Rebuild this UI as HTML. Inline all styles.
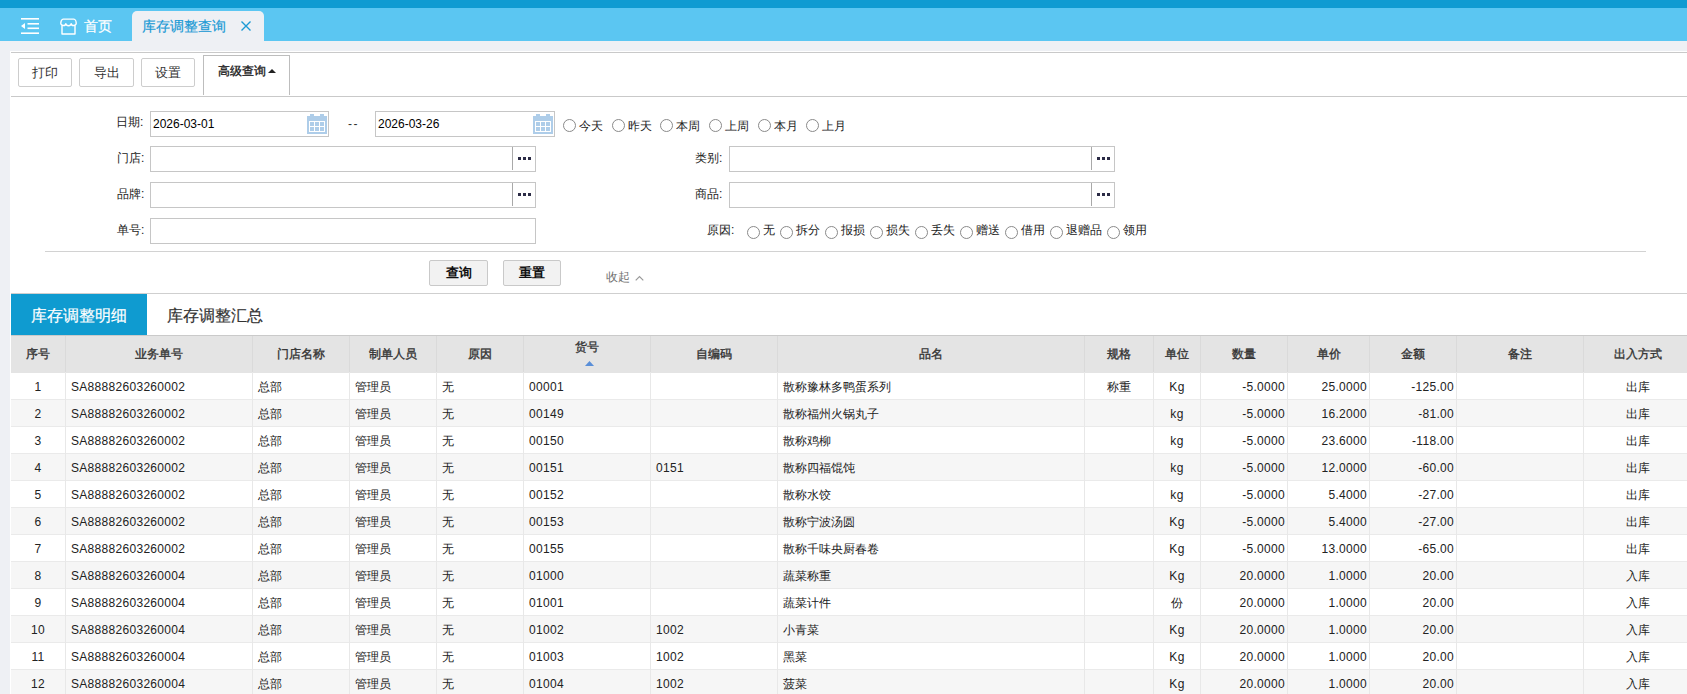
<!DOCTYPE html><html><head><meta charset="utf-8"><style>
*{margin:0;padding:0;box-sizing:border-box}
html,body{width:1687px;height:694px;overflow:hidden;background:#eef0f4;font-family:"Liberation Sans",sans-serif;color:#333}
.abs{position:absolute}
.btn{position:absolute;height:29px;border:1px solid #cdcdcd;border-radius:2px;background:#fff;font-size:13px;line-height:27px;text-align:center;color:#333}
.inp{position:absolute;height:26px;border:1px solid #c6c6c6;background:#fff}
.lab{position:absolute;font-size:12px;line-height:14px;color:#222;white-space:nowrap}
.lbl{position:absolute;font-size:12px;line-height:14px;color:#222;white-space:nowrap}
.radio{position:absolute;width:13px;height:13px;border:1px solid #8a8a8a;border-radius:50%;background:#fff}
.dots{position:absolute;width:13px;height:3px;background:linear-gradient(90deg,#2b2b45 0 3px,transparent 3px 5px,#2b2b45 5px 8px,transparent 8px 10px,#2b2b45 10px 13px)}
.th{position:absolute;top:336px;height:37px;font-size:12px;font-weight:normal;-webkit-text-stroke:0.35px #333;line-height:36px;text-align:center;color:#333;border-right:1px solid #dadada}
.td{position:absolute;height:27px;font-size:12px;line-height:30px;color:#222;white-space:nowrap;border-right:1px solid #e8e8e8;padding:0 5px}
.row{position:absolute;left:11px;width:1676px;height:27px;border-bottom:1px solid #eaeaea}
.n{letter-spacing:0.3px}
</style></head><body>

<div class="abs" style="left:0;top:0;width:1687px;height:8px;background:#0f9bd2"></div>
<div class="abs" style="left:0;top:8px;width:1687px;height:33px;background:#5bc6f2"></div>
<svg class="abs" style="left:21px;top:18px" width="18" height="16" viewBox="0 0 18 16"><g fill="#fff"><rect x="0" y="0" width="18" height="1.6"/><rect x="6.5" y="5" width="11.5" height="1.6"/><rect x="6.5" y="9.5" width="11.5" height="1.6"/><rect x="0" y="14.4" width="18" height="1.6"/><path d="M0 8L4 5v6z"/></g></svg>
<svg class="abs" style="left:60px;top:18px" width="17" height="17" viewBox="0 0 17 17"><g fill="none" stroke="#fff" stroke-width="1.4" stroke-linejoin="round"><path d="M3.2 1.1H13.8C15.3 1.1 16.2 3.6 16.2 5.3A2.5 2.1 0 0 1 11.2 5.6A2.7 2.1 0 0 1 5.8 5.6A2.5 2.1 0 0 1 0.8 5.3C0.8 3.6 1.7 1.1 3.2 1.1Z"/><path d="M2 7.4V16H15V7.4"/></g></svg>
<div class="abs" style="left:84px;top:16px;font-size:14px;line-height:20px;color:#fff;-webkit-text-stroke:0.2px #fff">首页</div>
<div class="abs" style="left:132px;top:11px;width:132px;height:30px;background:#eef0f4;border-radius:5px 5px 0 0"></div>
<div class="abs" style="left:142px;top:16px;font-size:14px;line-height:20px;color:#1b9ad5;-webkit-text-stroke:0.2px #1b9ad5">库存调整查询</div>
<svg class="abs" style="left:241px;top:21px" width="10" height="10" viewBox="0 0 10 10"><path d="M.5.5l9 9M9.5.5l-9 9" stroke="#1b9ad5" stroke-width="1.4"/></svg>
<div class="abs" style="left:10px;top:51px;width:1677px;height:643px;background:#fff"></div>
<div class="abs" style="left:11px;top:52px;width:1676px;height:1px;background:#c9c9c9"></div>
<div class="abs" style="left:11px;top:96px;width:1676px;height:1px;background:#c9c9c9"></div>
<div class="btn" style="left:18px;top:58px;width:54px">打印</div>
<div class="btn" style="left:79px;top:58px;width:55px">导出</div>
<div class="btn" style="left:141px;top:58px;width:54px">设置</div>
<div class="abs" style="left:203px;top:55px;width:87px;height:40px;border:1px solid #bdbdbd;border-bottom:none;background:#fff"></div>
<div class="abs" style="left:218px;top:63px;font-size:12px;-webkit-text-stroke:0.35px #222;line-height:16px;color:#222">高级查询</div>
<svg class="abs" style="left:268px;top:69px" width="8" height="4" viewBox="0 0 8 4"><path d="M0 4L4 0l4 4z" fill="#222"/></svg>
<div class="lab" style="left:116px;top:115px">日期:</div>
<div class="inp" style="left:150px;top:111px;width:179px"></div>
<div class="abs" style="left:153px;top:117px;font-size:12px;line-height:14px;color:#000">2026-03-01</div>
<svg class="abs" style="left:307px;top:114px" width="20" height="20" viewBox="0 0 20 20"><path fill="#aecde9" d="M3 0h4v2h6V0h4v2h3v18H0V2h3z"/><rect x="2" y="7" width="16" height="11" fill="#fff"/><g fill="#aecde9"><rect x="3" y="8" width="4" height="4"/><rect x="8" y="8" width="4" height="4"/><rect x="13" y="8" width="4" height="4"/><rect x="3" y="13" width="4" height="4"/><rect x="8" y="13" width="4" height="4"/><rect x="13" y="13" width="4" height="4"/></g></svg>
<div class="abs" style="left:348px;top:117px;font-size:12px;line-height:14px;color:#333;letter-spacing:1.5px">--</div>
<div class="inp" style="left:375px;top:111px;width:180px"></div>
<div class="abs" style="left:378px;top:117px;font-size:12px;line-height:14px;color:#000">2026-03-26</div>
<svg class="abs" style="left:533px;top:114px" width="20" height="20" viewBox="0 0 20 20"><path fill="#aecde9" d="M3 0h4v2h6V0h4v2h3v18H0V2h3z"/><rect x="2" y="7" width="16" height="11" fill="#fff"/><g fill="#aecde9"><rect x="3" y="8" width="4" height="4"/><rect x="8" y="8" width="4" height="4"/><rect x="13" y="8" width="4" height="4"/><rect x="3" y="13" width="4" height="4"/><rect x="8" y="13" width="4" height="4"/><rect x="13" y="13" width="4" height="4"/></g></svg>
<div class="radio" style="left:563px;top:119px"></div><div class="lbl" style="left:579px;top:119px">今天</div>
<div class="radio" style="left:612px;top:119px"></div><div class="lbl" style="left:628px;top:119px">昨天</div>
<div class="radio" style="left:660px;top:119px"></div><div class="lbl" style="left:676px;top:119px">本周</div>
<div class="radio" style="left:709px;top:119px"></div><div class="lbl" style="left:725px;top:119px">上周</div>
<div class="radio" style="left:758px;top:119px"></div><div class="lbl" style="left:774px;top:119px">本月</div>
<div class="radio" style="left:806px;top:119px"></div><div class="lbl" style="left:822px;top:119px">上月</div>
<div class="lab" style="left:117px;top:151px">门店:</div>
<div class="inp" style="left:150px;top:146px;width:386px"></div><div class="abs" style="left:512px;top:147px;width:1px;height:23px;background:#a9a9a9"></div><div class="dots" style="left:518px;top:157px"></div>
<div class="lab" style="left:695px;top:151px">类别:</div>
<div class="inp" style="left:729px;top:146px;width:386px"></div><div class="abs" style="left:1091px;top:147px;width:1px;height:23px;background:#a9a9a9"></div><div class="dots" style="left:1097px;top:157px"></div>
<div class="lab" style="left:117px;top:187px">品牌:</div>
<div class="inp" style="left:150px;top:182px;width:386px"></div><div class="abs" style="left:512px;top:183px;width:1px;height:23px;background:#a9a9a9"></div><div class="dots" style="left:518px;top:193px"></div>
<div class="lab" style="left:695px;top:187px">商品:</div>
<div class="inp" style="left:729px;top:182px;width:386px"></div><div class="abs" style="left:1091px;top:183px;width:1px;height:23px;background:#a9a9a9"></div><div class="dots" style="left:1097px;top:193px"></div>
<div class="lab" style="left:117px;top:223px">单号:</div>
<div class="inp" style="left:150px;top:218px;width:386px"></div>
<div class="lab" style="left:707px;top:223px">原因:</div>
<div class="radio" style="left:747px;top:226px"></div><div class="lbl" style="left:763px;top:223px">无</div>
<div class="radio" style="left:780px;top:226px"></div><div class="lbl" style="left:796px;top:223px">拆分</div>
<div class="radio" style="left:825px;top:226px"></div><div class="lbl" style="left:841px;top:223px">报损</div>
<div class="radio" style="left:870px;top:226px"></div><div class="lbl" style="left:886px;top:223px">损失</div>
<div class="radio" style="left:915px;top:226px"></div><div class="lbl" style="left:931px;top:223px">丢失</div>
<div class="radio" style="left:960px;top:226px"></div><div class="lbl" style="left:976px;top:223px">赠送</div>
<div class="radio" style="left:1005px;top:226px"></div><div class="lbl" style="left:1021px;top:223px">借用</div>
<div class="radio" style="left:1050px;top:226px"></div><div class="lbl" style="left:1066px;top:223px">退赠品</div>
<div class="radio" style="left:1107px;top:226px"></div><div class="lbl" style="left:1123px;top:223px">领用</div>
<div class="abs" style="left:45px;top:251px;width:1601px;height:1px;background:#d2d2d2"></div>
<div class="btn" style="left:429px;top:260px;width:59px;height:26px;line-height:24px;background:#f2f2f2;font-weight:bold;color:#111;border-color:#c9c9c9">查询</div>
<div class="btn" style="left:503px;top:260px;width:58px;height:26px;line-height:24px;background:#f2f2f2;font-weight:bold;color:#111;border-color:#c9c9c9">重置</div>
<div class="abs" style="left:606px;top:270px;font-size:12px;line-height:14px;color:#707070">收起</div>
<svg class="abs" style="left:635px;top:275px" width="9" height="6" viewBox="0 0 9 6"><path d="M.7 5.3L4.5 1.5l3.8 3.8" fill="none" stroke="#999" stroke-width="1.2"/></svg>
<div class="abs" style="left:11px;top:293px;width:1676px;height:1px;background:#cfcfcf"></div>
<div class="abs" style="left:11px;top:294px;width:136px;height:41px;background:#0f9bd0"></div>
<div class="abs" style="left:31px;top:306px;font-size:16px;line-height:20px;color:#fff;-webkit-text-stroke:0.2px #fff">库存调整明细</div>
<div class="abs" style="left:167px;top:306px;font-size:16px;line-height:20px;color:#333;-webkit-text-stroke:0.2px #333">库存调整汇总</div>
<div class="abs" style="left:11px;top:335px;width:1676px;height:38px;background:#e4e4e4;border-top:1px solid #cacaca"></div>
<div class="th" style="left:11px;width:55px">序号</div>
<div class="th" style="left:66px;width:187px">业务单号</div>
<div class="th" style="left:253px;width:97px">门店名称</div>
<div class="th" style="left:350px;width:87px">制单人员</div>
<div class="th" style="left:437px;width:87px">原因</div>
<div class="th" style="left:524px;width:127px;line-height:16px;padding-top:3px">货号</div>
<svg class="abs" style="left:585px;top:361px" width="9" height="5" viewBox="0 0 9 5"><path d="M0 5L4.5 0 9 5z" fill="#5a8fd8"/></svg>
<div class="th" style="left:651px;width:127px">自编码</div>
<div class="th" style="left:778px;width:307px">品名</div>
<div class="th" style="left:1085px;width:69px">规格</div>
<div class="th" style="left:1154px;width:47px">单位</div>
<div class="th" style="left:1201px;width:87px">数量</div>
<div class="th" style="left:1288px;width:82px">单价</div>
<div class="th" style="left:1370px;width:87px">金额</div>
<div class="th" style="left:1457px;width:127px">备注</div>
<div class="th" style="left:1584px;width:109px">出入方式</div>
<div class="row" style="top:373px;background:#fff"></div>
<div class="td n" style="left:11px;top:372px;width:55px;height:28px;text-align:center;">1</div>
<div class="td n" style="left:66px;top:372px;width:187px;height:28px;text-align:left;">SA88882603260002</div>
<div class="td" style="left:253px;top:372px;width:97px;height:28px;text-align:left;">总部</div>
<div class="td" style="left:350px;top:372px;width:87px;height:28px;text-align:left;">管理员</div>
<div class="td" style="left:437px;top:372px;width:87px;height:28px;text-align:left;">无</div>
<div class="td n" style="left:524px;top:372px;width:127px;height:28px;text-align:left;">00001</div>
<div class="td n" style="left:651px;top:372px;width:127px;height:28px;text-align:left;"></div>
<div class="td" style="left:778px;top:372px;width:307px;height:28px;text-align:left;">散称豫林多鸭蛋系列</div>
<div class="td" style="left:1085px;top:372px;width:69px;height:28px;text-align:center;">称重</div>
<div class="td n" style="left:1154px;top:372px;width:47px;height:28px;text-align:center;">Kg</div>
<div class="td n" style="left:1201px;top:372px;width:87px;height:28px;text-align:right;padding:0 2px 0 3px">-5.0000</div>
<div class="td n" style="left:1288px;top:372px;width:82px;height:28px;text-align:right;padding:0 2px 0 3px">25.0000</div>
<div class="td n" style="left:1370px;top:372px;width:87px;height:28px;text-align:right;padding:0 2px 0 3px">-125.00</div>
<div class="td n" style="left:1457px;top:372px;width:127px;height:28px;text-align:left;"></div>
<div class="td" style="left:1584px;top:372px;width:109px;height:28px;text-align:center;">出库</div>
<div class="row" style="top:400px;background:#f6f6f6"></div>
<div class="td n" style="left:11px;top:399px;width:55px;height:28px;text-align:center;">2</div>
<div class="td n" style="left:66px;top:399px;width:187px;height:28px;text-align:left;">SA88882603260002</div>
<div class="td" style="left:253px;top:399px;width:97px;height:28px;text-align:left;">总部</div>
<div class="td" style="left:350px;top:399px;width:87px;height:28px;text-align:left;">管理员</div>
<div class="td" style="left:437px;top:399px;width:87px;height:28px;text-align:left;">无</div>
<div class="td n" style="left:524px;top:399px;width:127px;height:28px;text-align:left;">00149</div>
<div class="td n" style="left:651px;top:399px;width:127px;height:28px;text-align:left;"></div>
<div class="td" style="left:778px;top:399px;width:307px;height:28px;text-align:left;">散称福州火锅丸子</div>
<div class="td n" style="left:1085px;top:399px;width:69px;height:28px;text-align:center;"></div>
<div class="td n" style="left:1154px;top:399px;width:47px;height:28px;text-align:center;">kg</div>
<div class="td n" style="left:1201px;top:399px;width:87px;height:28px;text-align:right;padding:0 2px 0 3px">-5.0000</div>
<div class="td n" style="left:1288px;top:399px;width:82px;height:28px;text-align:right;padding:0 2px 0 3px">16.2000</div>
<div class="td n" style="left:1370px;top:399px;width:87px;height:28px;text-align:right;padding:0 2px 0 3px">-81.00</div>
<div class="td n" style="left:1457px;top:399px;width:127px;height:28px;text-align:left;"></div>
<div class="td" style="left:1584px;top:399px;width:109px;height:28px;text-align:center;">出库</div>
<div class="row" style="top:427px;background:#fff"></div>
<div class="td n" style="left:11px;top:426px;width:55px;height:28px;text-align:center;">3</div>
<div class="td n" style="left:66px;top:426px;width:187px;height:28px;text-align:left;">SA88882603260002</div>
<div class="td" style="left:253px;top:426px;width:97px;height:28px;text-align:left;">总部</div>
<div class="td" style="left:350px;top:426px;width:87px;height:28px;text-align:left;">管理员</div>
<div class="td" style="left:437px;top:426px;width:87px;height:28px;text-align:left;">无</div>
<div class="td n" style="left:524px;top:426px;width:127px;height:28px;text-align:left;">00150</div>
<div class="td n" style="left:651px;top:426px;width:127px;height:28px;text-align:left;"></div>
<div class="td" style="left:778px;top:426px;width:307px;height:28px;text-align:left;">散称鸡柳</div>
<div class="td n" style="left:1085px;top:426px;width:69px;height:28px;text-align:center;"></div>
<div class="td n" style="left:1154px;top:426px;width:47px;height:28px;text-align:center;">kg</div>
<div class="td n" style="left:1201px;top:426px;width:87px;height:28px;text-align:right;padding:0 2px 0 3px">-5.0000</div>
<div class="td n" style="left:1288px;top:426px;width:82px;height:28px;text-align:right;padding:0 2px 0 3px">23.6000</div>
<div class="td n" style="left:1370px;top:426px;width:87px;height:28px;text-align:right;padding:0 2px 0 3px">-118.00</div>
<div class="td n" style="left:1457px;top:426px;width:127px;height:28px;text-align:left;"></div>
<div class="td" style="left:1584px;top:426px;width:109px;height:28px;text-align:center;">出库</div>
<div class="row" style="top:454px;background:#f6f6f6"></div>
<div class="td n" style="left:11px;top:453px;width:55px;height:28px;text-align:center;">4</div>
<div class="td n" style="left:66px;top:453px;width:187px;height:28px;text-align:left;">SA88882603260002</div>
<div class="td" style="left:253px;top:453px;width:97px;height:28px;text-align:left;">总部</div>
<div class="td" style="left:350px;top:453px;width:87px;height:28px;text-align:left;">管理员</div>
<div class="td" style="left:437px;top:453px;width:87px;height:28px;text-align:left;">无</div>
<div class="td n" style="left:524px;top:453px;width:127px;height:28px;text-align:left;">00151</div>
<div class="td n" style="left:651px;top:453px;width:127px;height:28px;text-align:left;">0151</div>
<div class="td" style="left:778px;top:453px;width:307px;height:28px;text-align:left;">散称四福馄饨</div>
<div class="td n" style="left:1085px;top:453px;width:69px;height:28px;text-align:center;"></div>
<div class="td n" style="left:1154px;top:453px;width:47px;height:28px;text-align:center;">kg</div>
<div class="td n" style="left:1201px;top:453px;width:87px;height:28px;text-align:right;padding:0 2px 0 3px">-5.0000</div>
<div class="td n" style="left:1288px;top:453px;width:82px;height:28px;text-align:right;padding:0 2px 0 3px">12.0000</div>
<div class="td n" style="left:1370px;top:453px;width:87px;height:28px;text-align:right;padding:0 2px 0 3px">-60.00</div>
<div class="td n" style="left:1457px;top:453px;width:127px;height:28px;text-align:left;"></div>
<div class="td" style="left:1584px;top:453px;width:109px;height:28px;text-align:center;">出库</div>
<div class="row" style="top:481px;background:#fff"></div>
<div class="td n" style="left:11px;top:480px;width:55px;height:28px;text-align:center;">5</div>
<div class="td n" style="left:66px;top:480px;width:187px;height:28px;text-align:left;">SA88882603260002</div>
<div class="td" style="left:253px;top:480px;width:97px;height:28px;text-align:left;">总部</div>
<div class="td" style="left:350px;top:480px;width:87px;height:28px;text-align:left;">管理员</div>
<div class="td" style="left:437px;top:480px;width:87px;height:28px;text-align:left;">无</div>
<div class="td n" style="left:524px;top:480px;width:127px;height:28px;text-align:left;">00152</div>
<div class="td n" style="left:651px;top:480px;width:127px;height:28px;text-align:left;"></div>
<div class="td" style="left:778px;top:480px;width:307px;height:28px;text-align:left;">散称水饺</div>
<div class="td n" style="left:1085px;top:480px;width:69px;height:28px;text-align:center;"></div>
<div class="td n" style="left:1154px;top:480px;width:47px;height:28px;text-align:center;">kg</div>
<div class="td n" style="left:1201px;top:480px;width:87px;height:28px;text-align:right;padding:0 2px 0 3px">-5.0000</div>
<div class="td n" style="left:1288px;top:480px;width:82px;height:28px;text-align:right;padding:0 2px 0 3px">5.4000</div>
<div class="td n" style="left:1370px;top:480px;width:87px;height:28px;text-align:right;padding:0 2px 0 3px">-27.00</div>
<div class="td n" style="left:1457px;top:480px;width:127px;height:28px;text-align:left;"></div>
<div class="td" style="left:1584px;top:480px;width:109px;height:28px;text-align:center;">出库</div>
<div class="row" style="top:508px;background:#f6f6f6"></div>
<div class="td n" style="left:11px;top:507px;width:55px;height:28px;text-align:center;">6</div>
<div class="td n" style="left:66px;top:507px;width:187px;height:28px;text-align:left;">SA88882603260002</div>
<div class="td" style="left:253px;top:507px;width:97px;height:28px;text-align:left;">总部</div>
<div class="td" style="left:350px;top:507px;width:87px;height:28px;text-align:left;">管理员</div>
<div class="td" style="left:437px;top:507px;width:87px;height:28px;text-align:left;">无</div>
<div class="td n" style="left:524px;top:507px;width:127px;height:28px;text-align:left;">00153</div>
<div class="td n" style="left:651px;top:507px;width:127px;height:28px;text-align:left;"></div>
<div class="td" style="left:778px;top:507px;width:307px;height:28px;text-align:left;">散称宁波汤圆</div>
<div class="td n" style="left:1085px;top:507px;width:69px;height:28px;text-align:center;"></div>
<div class="td n" style="left:1154px;top:507px;width:47px;height:28px;text-align:center;">Kg</div>
<div class="td n" style="left:1201px;top:507px;width:87px;height:28px;text-align:right;padding:0 2px 0 3px">-5.0000</div>
<div class="td n" style="left:1288px;top:507px;width:82px;height:28px;text-align:right;padding:0 2px 0 3px">5.4000</div>
<div class="td n" style="left:1370px;top:507px;width:87px;height:28px;text-align:right;padding:0 2px 0 3px">-27.00</div>
<div class="td n" style="left:1457px;top:507px;width:127px;height:28px;text-align:left;"></div>
<div class="td" style="left:1584px;top:507px;width:109px;height:28px;text-align:center;">出库</div>
<div class="row" style="top:535px;background:#fff"></div>
<div class="td n" style="left:11px;top:534px;width:55px;height:28px;text-align:center;">7</div>
<div class="td n" style="left:66px;top:534px;width:187px;height:28px;text-align:left;">SA88882603260002</div>
<div class="td" style="left:253px;top:534px;width:97px;height:28px;text-align:left;">总部</div>
<div class="td" style="left:350px;top:534px;width:87px;height:28px;text-align:left;">管理员</div>
<div class="td" style="left:437px;top:534px;width:87px;height:28px;text-align:left;">无</div>
<div class="td n" style="left:524px;top:534px;width:127px;height:28px;text-align:left;">00155</div>
<div class="td n" style="left:651px;top:534px;width:127px;height:28px;text-align:left;"></div>
<div class="td" style="left:778px;top:534px;width:307px;height:28px;text-align:left;">散称千味央厨春卷</div>
<div class="td n" style="left:1085px;top:534px;width:69px;height:28px;text-align:center;"></div>
<div class="td n" style="left:1154px;top:534px;width:47px;height:28px;text-align:center;">Kg</div>
<div class="td n" style="left:1201px;top:534px;width:87px;height:28px;text-align:right;padding:0 2px 0 3px">-5.0000</div>
<div class="td n" style="left:1288px;top:534px;width:82px;height:28px;text-align:right;padding:0 2px 0 3px">13.0000</div>
<div class="td n" style="left:1370px;top:534px;width:87px;height:28px;text-align:right;padding:0 2px 0 3px">-65.00</div>
<div class="td n" style="left:1457px;top:534px;width:127px;height:28px;text-align:left;"></div>
<div class="td" style="left:1584px;top:534px;width:109px;height:28px;text-align:center;">出库</div>
<div class="row" style="top:562px;background:#f6f6f6"></div>
<div class="td n" style="left:11px;top:561px;width:55px;height:28px;text-align:center;">8</div>
<div class="td n" style="left:66px;top:561px;width:187px;height:28px;text-align:left;">SA88882603260004</div>
<div class="td" style="left:253px;top:561px;width:97px;height:28px;text-align:left;">总部</div>
<div class="td" style="left:350px;top:561px;width:87px;height:28px;text-align:left;">管理员</div>
<div class="td" style="left:437px;top:561px;width:87px;height:28px;text-align:left;">无</div>
<div class="td n" style="left:524px;top:561px;width:127px;height:28px;text-align:left;">01000</div>
<div class="td n" style="left:651px;top:561px;width:127px;height:28px;text-align:left;"></div>
<div class="td" style="left:778px;top:561px;width:307px;height:28px;text-align:left;">蔬菜称重</div>
<div class="td n" style="left:1085px;top:561px;width:69px;height:28px;text-align:center;"></div>
<div class="td n" style="left:1154px;top:561px;width:47px;height:28px;text-align:center;">Kg</div>
<div class="td n" style="left:1201px;top:561px;width:87px;height:28px;text-align:right;padding:0 2px 0 3px">20.0000</div>
<div class="td n" style="left:1288px;top:561px;width:82px;height:28px;text-align:right;padding:0 2px 0 3px">1.0000</div>
<div class="td n" style="left:1370px;top:561px;width:87px;height:28px;text-align:right;padding:0 2px 0 3px">20.00</div>
<div class="td n" style="left:1457px;top:561px;width:127px;height:28px;text-align:left;"></div>
<div class="td" style="left:1584px;top:561px;width:109px;height:28px;text-align:center;">入库</div>
<div class="row" style="top:589px;background:#fff"></div>
<div class="td n" style="left:11px;top:588px;width:55px;height:28px;text-align:center;">9</div>
<div class="td n" style="left:66px;top:588px;width:187px;height:28px;text-align:left;">SA88882603260004</div>
<div class="td" style="left:253px;top:588px;width:97px;height:28px;text-align:left;">总部</div>
<div class="td" style="left:350px;top:588px;width:87px;height:28px;text-align:left;">管理员</div>
<div class="td" style="left:437px;top:588px;width:87px;height:28px;text-align:left;">无</div>
<div class="td n" style="left:524px;top:588px;width:127px;height:28px;text-align:left;">01001</div>
<div class="td n" style="left:651px;top:588px;width:127px;height:28px;text-align:left;"></div>
<div class="td" style="left:778px;top:588px;width:307px;height:28px;text-align:left;">蔬菜计件</div>
<div class="td n" style="left:1085px;top:588px;width:69px;height:28px;text-align:center;"></div>
<div class="td" style="left:1154px;top:588px;width:47px;height:28px;text-align:center;">份</div>
<div class="td n" style="left:1201px;top:588px;width:87px;height:28px;text-align:right;padding:0 2px 0 3px">20.0000</div>
<div class="td n" style="left:1288px;top:588px;width:82px;height:28px;text-align:right;padding:0 2px 0 3px">1.0000</div>
<div class="td n" style="left:1370px;top:588px;width:87px;height:28px;text-align:right;padding:0 2px 0 3px">20.00</div>
<div class="td n" style="left:1457px;top:588px;width:127px;height:28px;text-align:left;"></div>
<div class="td" style="left:1584px;top:588px;width:109px;height:28px;text-align:center;">入库</div>
<div class="row" style="top:616px;background:#f6f6f6"></div>
<div class="td n" style="left:11px;top:615px;width:55px;height:28px;text-align:center;">10</div>
<div class="td n" style="left:66px;top:615px;width:187px;height:28px;text-align:left;">SA88882603260004</div>
<div class="td" style="left:253px;top:615px;width:97px;height:28px;text-align:left;">总部</div>
<div class="td" style="left:350px;top:615px;width:87px;height:28px;text-align:left;">管理员</div>
<div class="td" style="left:437px;top:615px;width:87px;height:28px;text-align:left;">无</div>
<div class="td n" style="left:524px;top:615px;width:127px;height:28px;text-align:left;">01002</div>
<div class="td n" style="left:651px;top:615px;width:127px;height:28px;text-align:left;">1002</div>
<div class="td" style="left:778px;top:615px;width:307px;height:28px;text-align:left;">小青菜</div>
<div class="td n" style="left:1085px;top:615px;width:69px;height:28px;text-align:center;"></div>
<div class="td n" style="left:1154px;top:615px;width:47px;height:28px;text-align:center;">Kg</div>
<div class="td n" style="left:1201px;top:615px;width:87px;height:28px;text-align:right;padding:0 2px 0 3px">20.0000</div>
<div class="td n" style="left:1288px;top:615px;width:82px;height:28px;text-align:right;padding:0 2px 0 3px">1.0000</div>
<div class="td n" style="left:1370px;top:615px;width:87px;height:28px;text-align:right;padding:0 2px 0 3px">20.00</div>
<div class="td n" style="left:1457px;top:615px;width:127px;height:28px;text-align:left;"></div>
<div class="td" style="left:1584px;top:615px;width:109px;height:28px;text-align:center;">入库</div>
<div class="row" style="top:643px;background:#fff"></div>
<div class="td n" style="left:11px;top:642px;width:55px;height:28px;text-align:center;">11</div>
<div class="td n" style="left:66px;top:642px;width:187px;height:28px;text-align:left;">SA88882603260004</div>
<div class="td" style="left:253px;top:642px;width:97px;height:28px;text-align:left;">总部</div>
<div class="td" style="left:350px;top:642px;width:87px;height:28px;text-align:left;">管理员</div>
<div class="td" style="left:437px;top:642px;width:87px;height:28px;text-align:left;">无</div>
<div class="td n" style="left:524px;top:642px;width:127px;height:28px;text-align:left;">01003</div>
<div class="td n" style="left:651px;top:642px;width:127px;height:28px;text-align:left;">1002</div>
<div class="td" style="left:778px;top:642px;width:307px;height:28px;text-align:left;">黑菜</div>
<div class="td n" style="left:1085px;top:642px;width:69px;height:28px;text-align:center;"></div>
<div class="td n" style="left:1154px;top:642px;width:47px;height:28px;text-align:center;">Kg</div>
<div class="td n" style="left:1201px;top:642px;width:87px;height:28px;text-align:right;padding:0 2px 0 3px">20.0000</div>
<div class="td n" style="left:1288px;top:642px;width:82px;height:28px;text-align:right;padding:0 2px 0 3px">1.0000</div>
<div class="td n" style="left:1370px;top:642px;width:87px;height:28px;text-align:right;padding:0 2px 0 3px">20.00</div>
<div class="td n" style="left:1457px;top:642px;width:127px;height:28px;text-align:left;"></div>
<div class="td" style="left:1584px;top:642px;width:109px;height:28px;text-align:center;">入库</div>
<div class="row" style="top:670px;background:#f6f6f6"></div>
<div class="td n" style="left:11px;top:669px;width:55px;height:28px;text-align:center;">12</div>
<div class="td n" style="left:66px;top:669px;width:187px;height:28px;text-align:left;">SA88882603260004</div>
<div class="td" style="left:253px;top:669px;width:97px;height:28px;text-align:left;">总部</div>
<div class="td" style="left:350px;top:669px;width:87px;height:28px;text-align:left;">管理员</div>
<div class="td" style="left:437px;top:669px;width:87px;height:28px;text-align:left;">无</div>
<div class="td n" style="left:524px;top:669px;width:127px;height:28px;text-align:left;">01004</div>
<div class="td n" style="left:651px;top:669px;width:127px;height:28px;text-align:left;">1002</div>
<div class="td" style="left:778px;top:669px;width:307px;height:28px;text-align:left;">菠菜</div>
<div class="td n" style="left:1085px;top:669px;width:69px;height:28px;text-align:center;"></div>
<div class="td n" style="left:1154px;top:669px;width:47px;height:28px;text-align:center;">Kg</div>
<div class="td n" style="left:1201px;top:669px;width:87px;height:28px;text-align:right;padding:0 2px 0 3px">20.0000</div>
<div class="td n" style="left:1288px;top:669px;width:82px;height:28px;text-align:right;padding:0 2px 0 3px">1.0000</div>
<div class="td n" style="left:1370px;top:669px;width:87px;height:28px;text-align:right;padding:0 2px 0 3px">20.00</div>
<div class="td n" style="left:1457px;top:669px;width:127px;height:28px;text-align:left;"></div>
<div class="td" style="left:1584px;top:669px;width:109px;height:28px;text-align:center;">入库</div>
</body></html>
